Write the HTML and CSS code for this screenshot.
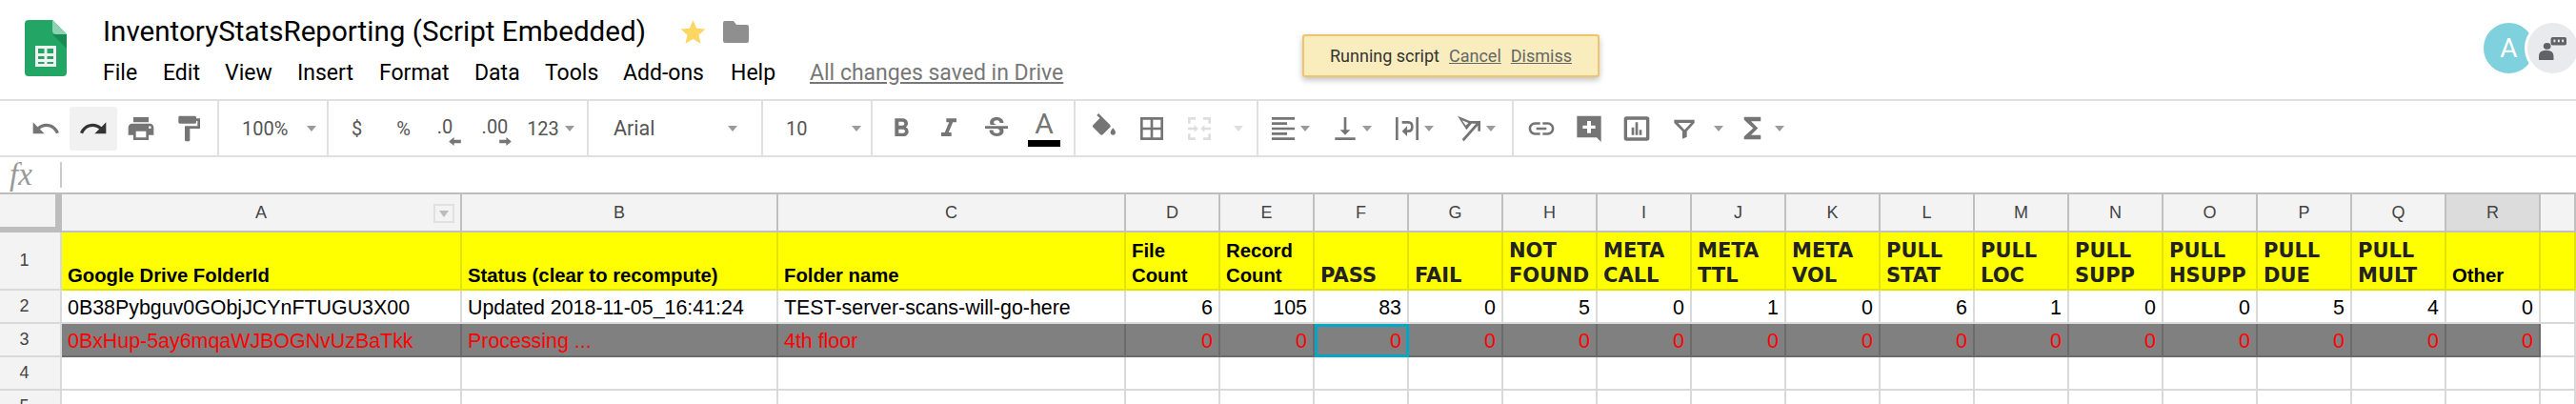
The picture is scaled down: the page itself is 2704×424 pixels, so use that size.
FILE: index.html
```html
<!DOCTYPE html>
<html>
<head>
    <title>InventoryStatsReporting (Script Embedded)</title>
    <link rel="stylesheet" href="styles.css">
</head>
<body>
    <header class="top">
        <svg class="logo" viewBox="0 0 44 59">
            <path fill="#23a566" d="M4 0H29L44 15V55Q44 59 40 59H4Q0 59 0 55V4Q0 0 4 0Z"/>
            <path fill="#188a52" d="M29 15L44 30V15Z"/>
            <path fill="#8ed1b1" d="M29 0L44 15H33Q29 15 29 11Z"/>
            <path fill="#f1f1f1" fill-rule="evenodd" d="M11 27H33V49H11ZM14 30V35H20.500V30ZM23.500 30V35H30V30ZM14 38V41H20.500V38ZM23.500 38V41H30V38ZM14 44V46H20.500V44ZM23.500 44V46H30V44Z"/>
        </svg>
        <div class="doc">
            <div class="doc-title">
                <span class="title-text">InventoryStatsReporting (Script Embedded)</span>
                <svg class="star" viewBox="0 0 24 24"><path d="M12 1l3.300 7.600 8.200.8-6.200 5.400 1.900 8.100L12 18.600 4.800 22.900l1.900-8.100L.5 9.400l8.200-.8z"/></svg>
                <svg class="folder" viewBox="0 0 27 23"><path d="M2 0H11L14 4H25Q27 4 27 6V21Q27 23 25 23H2Q0 23 0 21V2Q0 0 2 0Z"/></svg>
            </div>
            <nav class="menu">
                <a class="m-file">File</a>
                <a class="m-edit">Edit</a>
                <a class="m-view">View</a>
                <a class="m-insert">Insert</a>
                <a class="m-format">Format</a>
                <a class="m-data">Data</a>
                <a class="m-tools">Tools</a>
                <a class="m-addons">Add-ons</a>
                <a class="m-help">Help</a>
                <a class="saved">All changes saved in Drive</a>
            </nav>
        </div>
        <div class="avatars">
            <div class="avatar avatar-a">A</div>
            <div class="avatar avatar-chat">
                <svg viewBox="0 0 30 28" preserveAspectRatio="none">
                    <circle cx="9" cy="11" r="4"/>
                    <path d="M0 28V23Q0 16 8 16Q16 16 16 23V28Z"/>
                    <path fill-rule="evenodd" d="M15 0H28Q30 0 30 2V8Q30 10 28 10H15Q13 10 13 8V2Q13 0 15 0ZM16 3V6H18V3ZM20.500 3V6H22.500V3ZM25 3V6H27V3Z"/>
                </svg>
            </div>
        </div>
    </header>

    <div class="notice">
        <span>Running script</span>
        <a>Cancel</a>
        <a>Dismiss</a>
    </div>

    <div class="toolbar">
        <div class="group g-history">
            <button class="tool"><svg viewBox="0 0 24 24"><path d="M12.500 8c-2.650 0-5.050.99-6.900 2.600L2 7v9h9l-3.620-3.620c1.390-1.160 3.160-1.880 5.120-1.880 3.540 0 6.550 2.310 7.600 5.500l2.370-.78C21.080 11.030 17.150 8 12.500 8z"/></svg></button>
            <button class="tool tool-on"><svg class="dark" viewBox="0 0 24 24"><path d="M18.400 10.600C16.550 8.990 14.150 8 11.500 8c-4.650 0-8.580 3.030-9.960 7.220L3.900 16c1.050-3.190 4.050-5.500 7.600-5.500 1.950 0 3.730.72 5.120 1.880L13 16h9V7l-3.600 3.600z"/></svg></button>
            <button class="tool"><svg viewBox="0 0 24 24"><path d="M19 8H5c-1.660 0-3 1.340-3 3v6h4v4h12v-4h4v-6c0-1.660-1.340-3-3-3zm-3 11H8v-5h8v5zm3-7c-.55 0-1-.45-1-1s.45-1 1-1 1 .45 1 1-.45 1-1 1zm-1-9H6v4h12V3z"/></svg></button>
            <button class="tool"><svg viewBox="0 0 24 24"><path d="M18 4V3c0-.55-.45-1-1-1H5c-.55 0-1 .45-1 1v4c0 .55.45 1 1 1h12c.55 0 1-.45 1-1V6h1v4H9v11c0 .55.45 1 1 1h2c.55 0 1-.45 1-1v-9h8V4h-3z"/></svg></button>
        </div>
        <div class="group g-zoom">
            <span class="tool-text">100%</span>
            <span class="arrow"></span>
        </div>
        <div class="group g-number">
            <span class="num">$</span>
            <span class="num">%</span>
            <span class="num dec dec-less">.0<svg viewBox="0 0 14 10"><path d="M0 5L6 0V3H14V7H6V10Z"/></svg></span>
            <span class="num dec dec-more">.00<svg viewBox="0 0 14 10"><path d="M14 5L8 0V3H0V7H8V10Z"/></svg></span>
            <span class="num n123">123</span>
            <span class="arrow"></span>
        </div>
        <div class="group g-font">
            <span class="tool-text">Arial</span>
            <span class="arrow"></span>
        </div>
        <div class="group g-size">
            <span class="tool-text">10</span>
            <span class="arrow"></span>
        </div>
        <div class="group g-style">
            <button class="tool"><svg viewBox="0 0 24 24"><path d="M15.600 10.790c.97-.67 1.650-1.770 1.650-2.790 0-2.260-1.750-4-4-4H7v14h7.040c2.090 0 3.710-1.700 3.710-3.790 0-1.520-.86-2.820-2.150-3.420zM10 6.500h3c.83 0 1.500.67 1.500 1.500s-.67 1.500-1.500 1.500h-3v-3zm3.500 9H10v-3h3.500c.83 0 1.500.67 1.500 1.500s-.67 1.500-1.500 1.500z"/></svg></button>
            <button class="tool"><svg viewBox="0 0 24 24"><path d="M10 4v3h2.210l-3.420 8H6v3h8v-3h-2.210l3.420-8H18V4z"/></svg></button>
            <button class="tool"><svg viewBox="0 0 24 24"><path d="M6.850 7.080C6.850 4.370 9.450 3 12.240 3c1.640 0 3 .49 3.900 1.280.77.65 1.460 1.730 1.460 3.240h-3.010c0-.31-.05-.59-.15-.85-.29-.86-1.200-1.280-2.250-1.280-1.860 0-2.340 1.020-2.340 1.700 0 .48.25.88.74 1.210.38.25.77.48 1.410.7H7.390c-.21-.34-.54-.89-.54-1.920zM21 12v-2H3v2h9.620c1.150.45 1.960.75 1.960 1.970 0 1-.81 1.670-2.280 1.670-1.540 0-2.930-.54-2.930-2.510H6.400c0 .55.08 1.130.24 1.580.81 2.290 3.290 3.300 5.670 3.300 2.270 0 5.300-.89 5.300-4.050 0-.3-.01-1.160-.48-1.940H21V12z"/></svg></button>
            <div class="tool text-color">A<span class="color-bar"></span></div>
        </div>
        <div class="group g-cell">
            <button class="tool"><svg viewBox="0 0 24 24"><path d="M16.560 8.940L7.620 0 6.210 1.410l2.380 2.380-5.150 5.150c-.59.59-.59 1.540 0 2.120l5.500 5.500c.29.29.68.44 1.060.44s.77-.15 1.060-.44l5.500-5.500c.59-.58.59-1.530 0-2.120zM19 11.500s-2 2.170-2 3.500c0 1.100.9 2 2 2s2-.9 2-2c0-1.330-2-3.500-2-3.500z"/></svg></button>
            <button class="tool"><svg viewBox="0 0 24 24"><path d="M3 3v18h18V3H3zm8 16H5v-6h6v6zm0-8H5V5h6v6zm8 8h-6v-6h6v6zm0-8h-6V5h6v6z"/></svg></button>
            <button class="tool tool-off"><svg viewBox="0 0 24 24"><path d="M3 3H9V5H5V8H3ZM15 3H21V8H19V5H15ZM3 16H5V19H9V21H3ZM19 16H21V21H15V19H19ZM3 11H8V9L11 12 8 15V13H3ZM21 11H16V9L13 12 16 15V13H21Z"/></svg></button>
            <span class="arrow arrow-off"></span>
        </div>
        <div class="group g-align">
            <button class="tool tool-drop"><svg viewBox="0 0 24 24"><path d="M15 15H3v2h12v-2zm0-8H3v2h12V7zM3 13h18v-2H3v2zm0 8h18v-2H3v2zM3 3v2h18V3H3z"/></svg></button>
            <span class="arrow"></span>
            <button class="tool tool-drop"><svg viewBox="0 0 24 24"><path d="M16 13h-3V3h-2v10H8l4 4 4-4zM4 19v2h16v-2H4z"/></svg></button>
            <span class="arrow"></span>
            <button class="tool tool-drop"><svg viewBox="0 0 24 24"><path d="M3 3H5V21H3ZM19 3H21V21H19ZM8 6H13Q17 6 17 10.500T13 15H12V18L8 14 12 10V13H13Q15 13 15 10.500T13 8H8Z"/></svg></button>
            <span class="arrow"></span>
            <button class="tool tool-drop"><svg viewBox="0 0 24 24"><path d="M3 2L15 7 10 13ZM6.500 5.500L9.500 9.500 11.500 7.500ZM21 6V14H19V9.500L8 22 6.500 20.500 17.500 8H13V6Z"/></svg></button>
            <span class="arrow"></span>
        </div>
        <div class="group g-insert">
            <button class="tool"><svg viewBox="0 0 24 24"><path d="M3.900 12c0-1.710 1.390-3.100 3.100-3.100h4V7H7c-2.760 0-5 2.240-5 5s2.240 5 5 5h4v-1.900H7c-1.710 0-3.100-1.390-3.100-3.100zM8 13h8v-2H8v2zm9-6h-4v1.900h4c1.710 0 3.100 1.390 3.100 3.100s-1.390 3.100-3.100 3.100h-4V17h4c2.760 0 5-2.240 5-5s-2.240-5-5-5z"/></svg></button>
            <button class="tool"><svg viewBox="0 0 24 24"><path fill-rule="evenodd" d="M2.500 2H21.500V22.500L18 19H2.500ZM10.500 6V9.500H7V12H10.500V15.500H13.500V12H17V9.500H13.500V6Z"/></svg></button>
            <button class="tool"><svg viewBox="0 0 24 24"><path fill-rule="evenodd" d="M4 2.500H20Q22 2.500 22 4.500V19.500Q22 21.500 20 21.500H4Q2 21.500 2 19.500V4.500Q2 2.500 4 2.500ZM4.500 5V19H19.500V5ZM8 11H10V17H8ZM11 7H13V17H11ZM14 13H16V17H14Z"/></svg></button>
            <button class="tool"><svg viewBox="0 0 24 24"><path fill-rule="evenodd" d="M4 5H20V7.500L14 14V18.500L10.500 20V14L4 7.500ZM7 7.500L12.200 13 17.300 7.500Z"/></svg></button>
            <span class="arrow arrow-filter"></span>
            <button class="tool tool-sigma"><svg viewBox="0 0 24 24"><path d="M18 4H6v2l6.500 6L6 18v2h12v-3h-7l5-5-5-5h7z"/></svg></button>
            <span class="arrow arrow-sigma"></span>
        </div>
    </div>

    <div class="formula">
        <span class="fx">fx</span>
        <span class="formula-sep"></span>
    </div>

    <table class="sheet">
        <colgroup>
            <col class="c-head"><col class="c-a"><col class="c-b"><col class="c-c">
            <col class="c-n"><col class="c-n"><col class="c-n"><col class="c-n">
            <col class="c-n"><col class="c-n"><col class="c-n"><col class="c-n">
            <col class="c-n"><col class="c-n"><col class="c-n"><col class="c-n">
            <col class="c-n"><col class="c-n"><col class="c-n"><col class="c-s">
        </colgroup>
        <tr class="letters">
            <th class="corner"></th>
            <th class="has-filter">A<span class="filter-btn"></span></th>
            <th>B</th><th>C</th><th>D</th><th>E</th><th>F</th><th>G</th><th>H</th><th>I</th>
            <th>J</th><th>K</th><th>L</th><th>M</th><th>N</th><th>O</th><th>P</th><th>Q</th>
            <th class="col-on">R</th><th></th>
        </tr>
        <tr class="r-title">
            <th class="rownum">1</th>
            <td>Google Drive FolderId</td>
            <td>Status (clear to recompute)</td>
            <td>Folder name</td>
            <td>File<br>Count</td>
            <td>Record<br>Count</td>
            <td class="wide">PASS</td>
            <td class="wide">FAIL</td>
            <td class="wide">NOT<br>FOUND</td>
            <td class="wide">META<br>CALL</td>
            <td class="wide">META<br>TTL</td>
            <td class="wide">META<br>VOL</td>
            <td class="wide">PULL<br>STAT</td>
            <td class="wide">PULL<br>LOC</td>
            <td class="wide">PULL<br>SUPP</td>
            <td class="wide">PULL<br>HSUPP</td>
            <td class="wide">PULL<br>DUE</td>
            <td class="wide">PULL<br>MULT</td>
            <td>Other</td>
            <td></td>
        </tr>
        <tr class="r-data">
            <th class="rownum">2</th>
            <td>0B38Pybguv0GObjJCYnFTUGU3X00</td>
            <td>Updated 2018-11-05_16:41:24</td>
            <td>TEST-server-scans-will-go-here</td>
            <td class="n">6</td><td class="n">105</td><td class="n">83</td><td class="n">0</td>
            <td class="n">5</td><td class="n">0</td><td class="n">1</td><td class="n">0</td>
            <td class="n">6</td><td class="n">1</td><td class="n">0</td><td class="n">0</td>
            <td class="n">5</td><td class="n">4</td><td class="n">0</td><td></td>
        </tr>
        <tr class="r-busy">
            <th class="rownum">3</th>
            <td>0BxHup-5ay6mqaWJBOGNvUzBaTkk</td>
            <td>Processing ...</td>
            <td>4th floor</td>
            <td class="n">0</td><td class="n">0</td><td class="n selected">0</td><td class="n">0</td>
            <td class="n">0</td><td class="n">0</td><td class="n">0</td><td class="n">0</td>
            <td class="n">0</td><td class="n">0</td><td class="n">0</td><td class="n">0</td>
            <td class="n">0</td><td class="n">0</td><td class="n">0</td><td class="blank"></td>
        </tr>
        <tr class="r-data">
            <th class="rownum">4</th>
            <td></td><td></td><td></td><td></td><td></td><td></td><td></td><td></td><td></td><td></td>
            <td></td><td></td><td></td><td></td><td></td><td></td><td></td><td></td><td></td>
        </tr>
        <tr class="r-data">
            <th class="rownum">5</th>
            <td></td><td></td><td></td><td></td><td></td><td></td><td></td><td></td><td></td><td></td>
            <td></td><td></td><td></td><td></td><td></td><td></td><td></td><td></td><td></td>
        </tr>
    </table>
</body>
</html>
```

FILE: styles.css
```css
html, body {
  margin: 0;
  height: 424px;
  overflow: hidden;
  background-color: #fff;
}

body {
  position: relative;
  font-family: Roboto, sans-serif;
  color: #000;
}

/* title area */
.top {
  display: flex;
  height: 104px;
}

.logo {
  width: 44px;
  height: 59px;
  margin: 21px 38px 0 26px;
  flex: none;
}

.doc-title {
  display: flex;
  align-items: center;
  height: 36px;
  margin-top: 15px;
}

.title-text {
  font-size: 29.6px;
  white-space: nowrap;
}

.star {
  width: 27px;
  height: 27px;
  margin-left: 36px;
  fill: #fdd663;
}

.folder {
  width: 27px;
  height: 23px;
  margin-left: 18px;
  fill: #8f8f8f;
}

.menu {
  display: flex;
  align-items: center;
  height: 30px;
  margin-top: 10px;
  font-size: 23px;
  white-space: nowrap;
}

.menu a {
  flex: none;
}

.m-file { width: 63px; }
.m-edit { width: 65px; }
.m-view { width: 76px; }
.m-insert { width: 86px; }
.m-format { width: 100px; }
.m-data { width: 74px; }
.m-tools { width: 82px; }
.m-addons { width: 113px; }
.m-help { width: 83px; }

.saved {
  color: #777;
  text-decoration: underline;
}

.avatars {
  display: flex;
  margin: 24px -5px 0 auto;
}

.avatar {
  width: 53px;
  height: 53px;
  border-radius: 50%;
  box-sizing: border-box;
  display: flex;
  align-items: center;
  justify-content: center;
}

.avatar-a {
  background-color: #80d1de;
  color: #fff;
  font-size: 28px;
}

.avatar-chat {
  background-color: #e8eaed;
  margin-left: -10px;
  width: 59px;
  height: 59px;
  margin-top: -3px;
  border: 3px solid #fff;
}

.avatar-chat svg {
  width: 29px;
  height: 24px;
  fill: #5f6368;
}

/* running script notice */
.notice {
  position: absolute;
  left: 1367px;
  top: 36px;
  width: 312px;
  height: 45px;
  box-sizing: border-box;
  display: flex;
  align-items: center;
  gap: 10px;
  padding-left: 27px;
  background-color: #f9edbe;
  border: 2px solid #f0c36d;
  border-radius: 3px;
  box-shadow: 0 3px 6px rgba(0, 0, 0, 0.25);
  font-size: 18px;
  color: #333;
  white-space: nowrap;
}

.notice a {
  color: #666;
  text-decoration: underline;
}

/* toolbar */
.toolbar {
  display: flex;
  height: 61px;
  box-sizing: border-box;
  border-top: 2px solid #e0e0e0;
  border-bottom: 2px solid #e0e0e0;
}

.group {
  display: flex;
  align-items: center;
  box-sizing: border-box;
  border-right: 2px solid #e0e0e0;
  flex: none;
}

.g-history { width: 230px; padding-left: 23px; }
.g-zoom { width: 115px; padding-left: 24px; }
.g-number { width: 273px; padding-left: 5px; }
.g-font { width: 183px; padding-left: 26px; }
.g-size { width: 115px; padding-left: 24px; }
.g-style { width: 213px; padding-left: 5px; }
.g-cell { width: 192px; padding-left: 5px; }
.g-align { width: 268px; padding-left: 8px; }
.g-insert { border-right: none; padding-left: 4px; }

.tool {
  width: 50px;
  height: 46px;
  padding: 0;
  border: none;
  border-radius: 3px;
  background: none;
  display: flex;
  align-items: center;
  justify-content: center;
  flex: none;
}

.tool svg {
  width: 32px;
  height: 32px;
  fill: #757575;
}

.tool svg.dark {
  fill: #333;
}

.tool-on {
  background-color: #f1f1f1;
}

.tool-off svg {
  fill: #dedede;
}

.tool-drop {
  width: 36px;
}

.tool-sigma {
  width: 42px;
}

.tool-sigma svg {
  width: 35px;
  height: 35px;
}

.tool-text {
  font-size: 20px;
  color: #555;
}

.g-zoom .tool-text { width: 68px; }
.g-font .tool-text { width: 120px; font-size: 21.5px; }
.g-size .tool-text { width: 69px; }

.arrow {
  width: 0;
  height: 0;
  flex: none;
  border-left: 5px solid transparent;
  border-right: 5px solid transparent;
  border-top: 6px solid #9a9a9a;
}

.g-align .arrow {
  margin-right: 19px;
}

.arrow-filter {
  margin: 0 9px 0 6px;
}

.arrow-sigma {
  margin-left: 3px;
}

.arrow-off {
  border-top-color: #dedede;
  margin-left: 11px;
}

.num {
  width: 49px;
  text-align: center;
  font-size: 20px;
  color: #555;
  flex: none;
}

.dec {
  position: relative;
  top: -2px;
}

.dec svg {
  position: absolute;
  top: 23px;
  width: 13px;
  height: 9px;
  fill: #757575;
}

.dec-less { width: 38px; }
.dec-less svg { right: 2px; }
.dec-more { width: 67px; }
.dec-more svg { right: 16px; }

.n123 {
  width: 34px;
  margin-right: 6px;
}

.text-color {
  flex-direction: column;
  font-size: 30px;
  line-height: 28px;
  color: #757575;
}

.color-bar {
  display: block;
  width: 34px;
  height: 7px;
  margin-top: 3px;
  background-color: #000;
}

/* formula bar */
.formula {
  display: flex;
  align-items: center;
  height: 39px;
  box-sizing: border-box;
  border-bottom: 2px solid #bdbdbd;
}

.fx {
  width: 63px;
  padding-left: 10px;
  box-sizing: border-box;
  font-family: "Liberation Serif", serif;
  font-style: italic;
  font-size: 33px;
  color: #999;
}

.formula-sep {
  width: 2px;
  height: 27px;
  background-color: #ccc;
}

/* sheet */
.sheet {
  table-layout: fixed;
  width: 2704px;
  border-collapse: separate;
  border-spacing: 0;
  font-family: "Liberation Sans", Arial, sans-serif;
  font-size: 21.4px;
}

.c-head { width: 65px; }
.c-a { width: 420px; }
.c-b { width: 332px; }
.c-c { width: 365px; }
.c-n { width: 99px; }
.c-s { width: 37px; }

.sheet th,
.sheet td {
  box-sizing: border-box;
  padding: 0;
  border-right: 2px solid #d9d9d9;
  border-bottom: 2px solid #d9d9d9;
  white-space: nowrap;
  overflow: hidden;
}

.sheet td {
  padding: 0 6px 2px 6px;
  vertical-align: bottom;
}

.sheet th {
  font-weight: normal;
  font-size: 18px;
  color: #444;
  background-color: #f3f3f3;
}

.letters th {
  height: 40px;
  border-right: 2px solid #c0c0c0;
  border-bottom: 2px solid #c0c0c0;
}

.letters .corner {
  border-right: 7px solid #bdbdbd;
  border-bottom: 6px solid #bdbdbd;
}

.letters .col-on {
  background-color: #dcdcdc;
}

.has-filter {
  position: relative;
}

.filter-btn {
  position: absolute;
  right: 6px;
  top: 10px;
  width: 22px;
  height: 20px;
  box-sizing: border-box;
  border: 2px solid #e0e0e0;
}

.filter-btn::after {
  content: "";
  position: absolute;
  left: 4px;
  top: 5px;
  border-left: 5px solid transparent;
  border-right: 5px solid transparent;
  border-top: 7px solid #bbb;
}

.rownum {
  padding-right: 12px !important;
  text-align: center;
}

.r-title td {
  height: 61px;
  padding-bottom: 1px;
  background-color: #ff0;
  border-right-color: #e3e300;
  border-bottom-color: #e3e300;
  font-size: 20.3px;
  font-weight: bold;
  line-height: 26px;
}

.r-title .wide {
  font-family: "DejaVu Sans", Verdana, sans-serif;
  font-size: 21px;
  color: #222;
}

.r-data td,
.r-data th {
  height: 35px;
}

.r-busy td,
.r-busy th {
  height: 35px;
}

.r-busy td {
  background-color: #808080;
  color: #f00;
  border-right-color: #6b6b6b;
  border-bottom-color: #6b6b6b;
}

.r-busy td.blank {
  background-color: #fff;
  border-right-color: #d9d9d9;
  border-bottom-color: #d9d9d9;
}

.n {
  text-align: right;
}

.sheet td.selected {
  outline: 3px solid #00a8c6;
  outline-offset: -3px;
}
```
